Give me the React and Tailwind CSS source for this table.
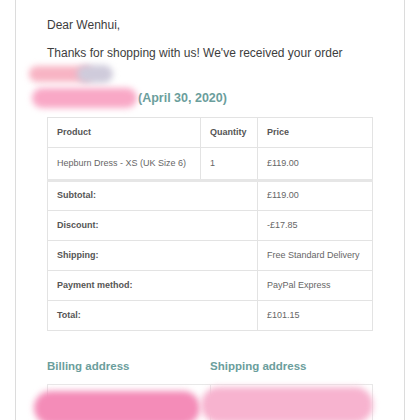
import React from 'react';

const rows = [
  { label: 'Subtotal:', value: '£119.00' },
  { label: 'Discount:', value: '-£17.85' },
  { label: 'Shipping:', value: 'Free Standard Delivery' },
  { label: 'Payment method:', value: 'PayPal Express' },
  { label: 'Total:', value: '£101.15' },
];

const cell = 'border border-[#e3e3e3] px-[9px]';

export default function App() {
  return (
    <div className="w-[420px] h-[420px] overflow-hidden bg-white font-['Liberation_Sans',Arial,sans-serif]">
      <div className="mx-[15px] h-full border-x border-[#dcdcdc] bg-white px-[31px]">
        <p className="pt-[17px] text-[12px] leading-[16px] text-[#3d3d3d]">Dear Wenhui,</p>
        <p className="mt-[12px] text-[12px] leading-[16px] text-[#3d3d3d]">
          Thanks for shopping with us! We've received your order
        </p>

        {/* redacted order number */}
        <div className="ml-[-18px] mt-[4px] flex h-[18px] items-center">
          <div className="h-[16px] w-[64px] rounded-full bg-[#f8b4c4] blur-[3px]" />
          <div className="ml-[-16px] h-[18px] w-[36px] rounded-full bg-[#cfcbdb] blur-[3px]" />
        </div>
        <div className="ml-[-15px] mt-[4px] flex h-[22px] items-center gap-[1px]">
          <div className="h-[20px] w-[105px] rounded-full bg-[#f9a8c6] blur-[3px]" />
          <span className="text-[12.5px] font-bold text-[#6b9e9c]">(April 30, 2020)</span>
        </div>

        <table className="mt-[8px] w-[326px] border-collapse text-[9px] text-[#666]">
          <tbody>
            <tr className="h-[30px] font-bold text-[#555]">
              <td className={`${cell} w-[153px]`}>Product</td>
              <td className={`${cell} w-[57px]`}>Quantity</td>
              <td className={cell}>Price</td>
            </tr>
            <tr className="h-[33px]">
              <td className={`${cell} border-b-[3px] border-b-[#e6e6e6]`}>Hepburn Dress - XS (UK Size 6)</td>
              <td className={`${cell} border-b-[3px] border-b-[#e6e6e6]`}>1</td>
              <td className={`${cell} border-b-[3px] border-b-[#e6e6e6]`}>£119.00</td>
            </tr>
            {rows.map(r => (
              <tr key={r.label} className="h-[30px]">
                <td colSpan={2} className={`${cell} font-bold text-[#555]`}>{r.label}</td>
                <td className={cell}>{r.value}</td>
              </tr>
            ))}
          </tbody>
        </table>

        <div className="mt-[27px] grid grid-cols-[163px_163px] text-[11.5px] font-bold text-[#6b9e9c]">
          <span>Billing address</span>
          <span>Shipping address</span>
        </div>

        <div className="mt-[9px] grid h-[60px] w-[326px] grid-cols-[163px_163px] border border-[#e8e8e8]">
          <div className="border-r border-[#e8e8e8] pt-[6px]">
            <div className="ml-[-14px] h-[34px] w-[166px] rounded-full bg-[#f48cb8] blur-[3px]" />
          </div>
          <div className="pt-[2px]">
            <div className="ml-[-10px] h-[36px] w-[172px] rounded-full bg-[#f7b3cf] blur-[3px]" />
          </div>
        </div>
      </div>
    </div>
  );
}
